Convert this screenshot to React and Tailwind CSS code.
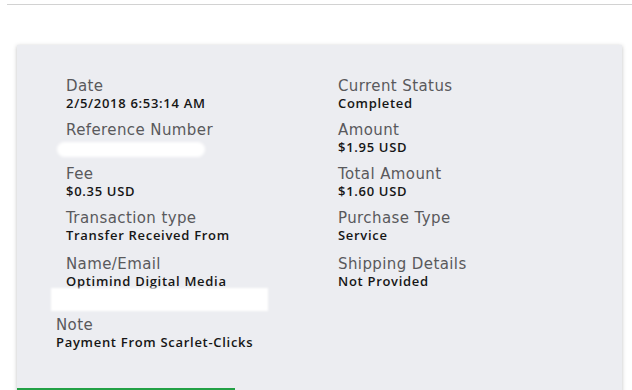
import React from 'react';

const left = [
  { label: 'Date', value: '2/5/2018 6:53:14 AM' },
  { label: 'Reference Number', redacted: true },
  { label: 'Fee', value: '$0.35 USD' },
  { label: 'Transaction type', value: 'Transfer Received From' },
];

const right = [
  { label: 'Current Status', value: 'Completed' },
  { label: 'Amount', value: '$1.95 USD' },
  { label: 'Total Amount', value: '$1.60 USD' },
  { label: 'Purchase Type', value: 'Service' },
];

const Label = ({ children }) => (
  <div className="text-[15px] leading-[18px] tracking-[0.4px] text-[#59595c]">{children}</div>
);

const Value = ({ children }) => (
  <div
    className="text-[13px] leading-[17px] font-semibold tracking-[0.7px] text-[#161616]"
    style={{ fontFamily: '"Open Sans", sans-serif' }}
  >
    {children}
  </div>
);

const Item = ({ label, value, redacted }) => (
  <div className="h-[44px]">
    <Label>{label}</Label>
    {redacted ? (
      <div className="-ml-[9px] mt-[3px] h-[15px] w-[148px] rounded-full bg-white blur-[1.5px]" />
    ) : (
      <Value>{value}</Value>
    )}
  </div>
);

export default function App() {
  return (
    <div className="h-[390px] overflow-hidden bg-white" style={{ fontFamily: '"DejaVu Sans", sans-serif' }}>
      <div className="ml-[7px] mt-[4px] h-[1px] bg-[#d2d2d2]" />
      <div className="ml-[17px] mt-[40px] w-[605px] h-[360px] bg-[#ecedf1] shadow-[0_1px_4px_rgba(0,0,0,0.25)] relative">
        <div className="pt-[32px] pl-[49px] grid grid-cols-[272px_1fr]">
          <div>
            {left.map((it) => (
              <Item key={it.label} {...it} />
            ))}
            <div className="mt-[2px]">
              <Label>Name/Email</Label>
              <Value>Optimind Digital Media</Value>
              <div className="-ml-[15px] -mt-[2px] h-[23px] w-[217px] bg-white blur-[1px]" />
            </div>
          </div>
          <div>
            {right.map((it) => (
              <Item key={it.label} {...it} />
            ))}
            <div className="mt-[2px]">
              <Label>Shipping Details</Label>
              <Value>Not Provided</Value>
            </div>
          </div>
        </div>
        <div className="pl-[39px] mt-[5px]">
          <Label>Note</Label>
          <Value>Payment From Scarlet-Clicks</Value>
        </div>
        <div className="absolute left-0 top-[343px] h-[2px] w-[218px] bg-[#22a045]" />
      </div>
    </div>
  );
}
